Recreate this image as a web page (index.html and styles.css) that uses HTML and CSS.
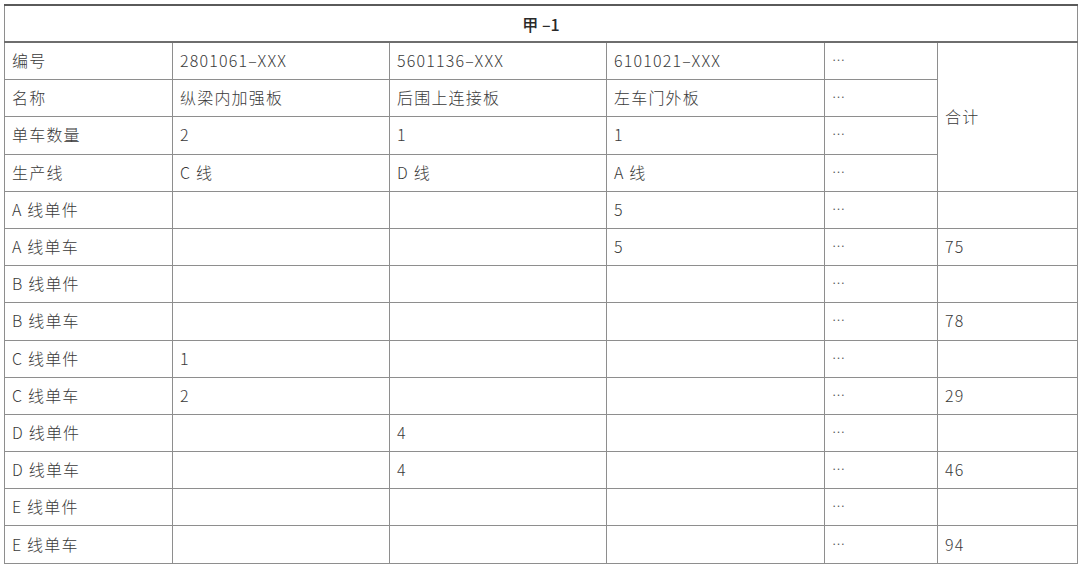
FILE: index.html
```html
<!DOCTYPE html>
<html lang="zh">
<head>
<meta charset="utf-8">
<link rel="stylesheet" href="styles.css">
</head>
<body>
<table class="sheet">
  <colgroup>
    <col class="c1"><col class="c2"><col class="c3"><col class="c4"><col class="c5"><col class="c6">
  </colgroup>
  <thead>
    <tr class="title-row"><th colspan="6">甲 –1</th></tr>
  </thead>
  <tbody>
    <tr><td>编号</td><td>2801061–XXX</td><td>5601136–XXX</td><td>6101021–XXX</td><td class="dots">…</td><td rowspan="4">合计</td></tr>
    <tr><td>名称</td><td>纵梁内加强板</td><td>后围上连接板</td><td>左车门外板</td><td class="dots">…</td></tr>
    <tr><td>单车数量</td><td>2</td><td>1</td><td>1</td><td class="dots">…</td></tr>
    <tr><td>生产线</td><td>C 线</td><td>D 线</td><td>A 线</td><td class="dots">…</td></tr>
    <tr><td>A 线单件</td><td></td><td></td><td>5</td><td class="dots">…</td><td></td></tr>
    <tr><td>A 线单车</td><td></td><td></td><td>5</td><td class="dots">…</td><td>75</td></tr>
    <tr><td>B 线单件</td><td></td><td></td><td></td><td class="dots">…</td><td></td></tr>
    <tr><td>B 线单车</td><td></td><td></td><td></td><td class="dots">…</td><td>78</td></tr>
    <tr><td>C 线单件</td><td>1</td><td></td><td></td><td class="dots">…</td><td></td></tr>
    <tr><td>C 线单车</td><td>2</td><td></td><td></td><td class="dots">…</td><td>29</td></tr>
    <tr><td>D 线单件</td><td></td><td>4</td><td></td><td class="dots">…</td><td></td></tr>
    <tr><td>D 线单车</td><td></td><td>4</td><td></td><td class="dots">…</td><td>46</td></tr>
    <tr><td>E 线单件</td><td></td><td></td><td></td><td class="dots">…</td><td></td></tr>
    <tr><td>E 线单车</td><td></td><td></td><td></td><td class="dots">…</td><td>94</td></tr>
  </tbody>
</table>
</body>
</html>
```

FILE: styles.css
```css
html, body {
  margin: 0;
  padding: 0;
  background: #ffffff;
}
body {
  padding: 4px 0 0 4px;
  font-family: "Noto Sans CJK SC", "Noto Sans", sans-serif;
  color: #3a3a3a;
}
.sheet {
  border-collapse: collapse;
  table-layout: fixed;
  width: 1073px;
  font-size: 16px;
  font-weight: 300;
}
.c1 { width: 168px; }
.c2 { width: 217px; }
.c3 { width: 217px; }
.c4 { width: 218px; }
.c5 { width: 113px; }
.c6 { width: 140px; }
.sheet td, .sheet th {
  border: 1px solid #8e8e8e;
  padding: 0 7px;
  text-align: left;
  vertical-align: middle;
  line-height: 20px;
  letter-spacing: 1.2px;
  white-space: nowrap;
}
.sheet td {
  height: 34.2px;
  padding-bottom: 2px;
}
.sheet .title-row th {
  border-top: 2px solid #5a5a5a;
  border-bottom: 2px solid #6e6e6e;
  height: 35px;
  text-align: center;
  font-weight: 500;
  letter-spacing: 0;
  color: #2a2a2a;
}
.sheet td.dots {
  font-size: 13px;
  letter-spacing: 1px;
  color: #555;
}
```
